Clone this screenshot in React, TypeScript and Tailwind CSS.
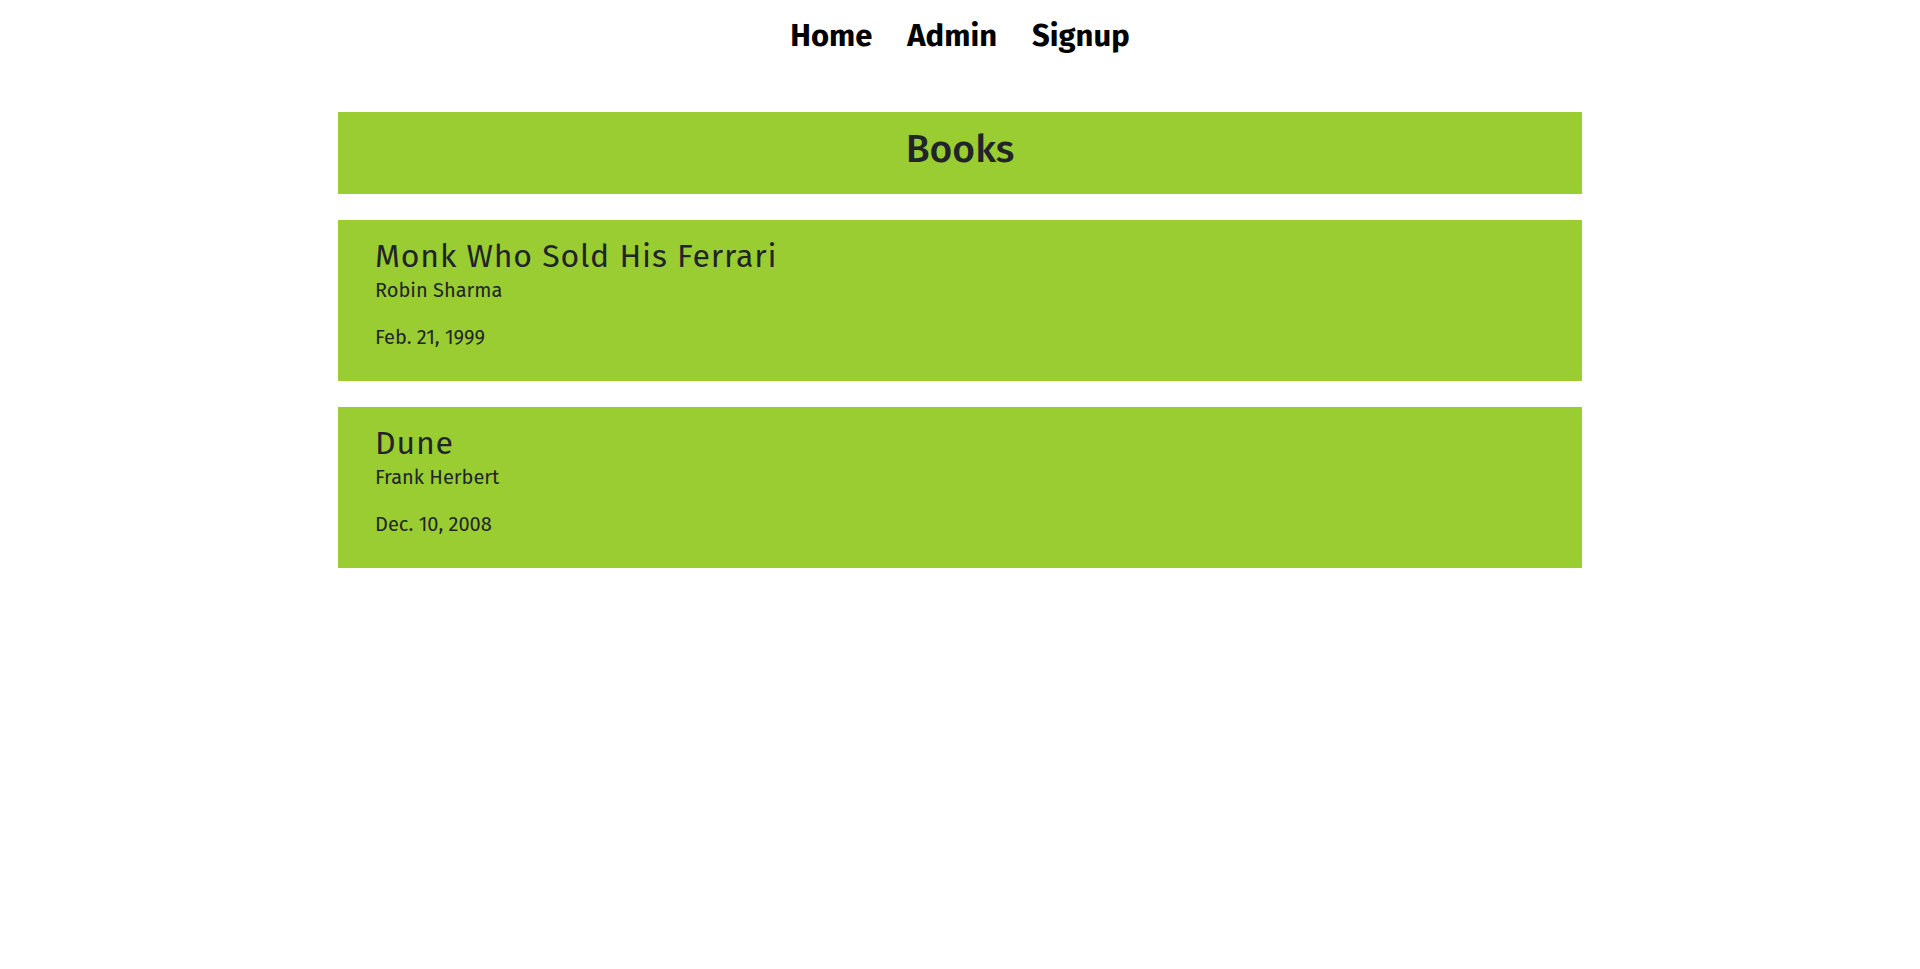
const books = [
  { title: "Monk Who Sold His Ferrari", author: "Robin Sharma", date: "Feb. 21, 1999" },
  { title: "Dune", author: "Frank Herbert", date: "Dec. 10, 2008" },
];

const App = () => {
  return (
    <div className="min-h-screen bg-white font-['Fira_Sans','Open_Sans',sans-serif] text-[#212529]">
      <nav className="flex justify-center gap-[35px] pt-[16px] h-[112px]">
        <a className="text-[31px] font-bold text-black leading-[40px]">Home</a>
        <a className="text-[31px] font-bold text-black leading-[40px]">Admin</a>
        <a className="text-[31px] font-bold text-black leading-[40px]">Signup</a>
      </nav>

      <div className="w-[1244px] mx-auto flex flex-col gap-[26px]">
        <div className="bg-[#9acd32] h-[82px] flex justify-center pt-[13px]">
          <h1 className="text-[39px] font-medium leading-[48px]">Books</h1>
        </div>

        {books.map((b) => (
          <div key={b.title} className="bg-[#9acd32] h-[161px] px-[37px] pt-[16px]">
            <h2 className="text-[32px] tracking-[0.85px] leading-[40px]">{b.title}</h2>
            <p className="text-[20px] leading-[28px]">{b.author}</p>
            <p className="text-[20px] leading-[28px] mt-[19px]">{b.date}</p>
          </div>
        ))}
      </div>
    </div>
  );
};

export default App;
